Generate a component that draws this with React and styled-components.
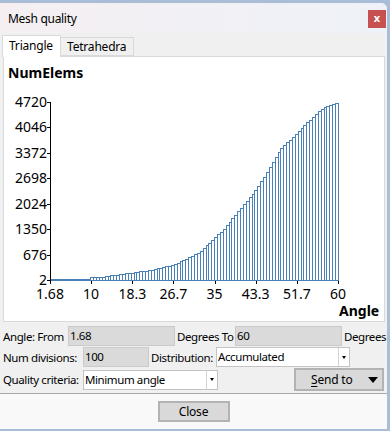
import styled, { createGlobalStyle } from "styled-components";

const GlobalStyle = createGlobalStyle`
  html, body {
    margin: 0;
    padding: 0;
    background: #aabdd6;
  }
  body {
    font-family: "Noto Sans", "Open Sans", sans-serif;
    font-size: 12px;
    color: #000;
  }
`

const Window = styled.div`
  margin-top: 3px;
  width: 387px;
  height: 426px;
  background: #f0f0f0;
  border-top-right-radius: 6px;
  display: flex;
  flex-direction: column;
  overflow: hidden;
`

const TitleBar = styled.div`
  height: 30px;
  flex: none;
  display: flex;
  align-items: center;
  justify-content: space-between;
  padding-left: 8px;
  background: linear-gradient(90deg, #f5eff2, #eef2f8);
  & span {
    letter-spacing: -0.3px;
  }
`

const CloseX = styled.div`
  width: 18px;
  height: 18px;
  margin-right: 1px;
  margin-top: 1px;
  background: #c75050;
  color: #fff;
  font-weight: bold;
  font-size: 11px;
  line-height: 16px;
  text-align: center;
`

const TabBar = styled.div`
  height: 23px;
  flex: none;
  display: flex;
  align-items: flex-end;
  padding-left: 2px;
  position: relative;
  z-index: 1;
`

const Tab = styled.div`
  height: ${({ active }) => active ? "22px" : "19px"};
  margin-bottom: ${({ active }) => active ? "-1px" : "0"};
  padding: 0 6px;
  box-sizing: border-box;
  width: ${({ w }) => w}px;
  border: 1px solid #d9d9d9;
  border-bottom: ${({ active }) => active ? "none" : "1px solid #d9d9d9"};
  border-left: ${({ first }) => first ? "1px solid #d9d9d9" : "none"};
  background: ${({ active }) => active ? "#fff" : "#f0f0f0"};
  line-height: ${({ active }) => active ? "20px" : "17px"};
  letter-spacing: -0.2px;
  white-space: nowrap;
`

const Panel = styled.div`
  margin-left: 3px;
  width: 380px;
  height: 264px;
  flex: none;
  border: 1px solid #d9d9d9;
  background: #fff;
  & svg {
    display: block;
  }
`

const Form = styled.div`
  flex: none;
  display: flex;
  flex-direction: column;
  gap: 1px;
  padding: 4px 3px 2px 3px;
  height: 71px;
  box-sizing: border-box;
  font-size: 11.5px;
  letter-spacing: -0.4px;
`

const Row = styled.div`
  display: flex;
  align-items: center;
  gap: 2px;
  height: ${({ h }) => h || 20}px;
`

const Label = styled.div`
  width: ${({ w }) => w ? w + "px" : "auto"};
  flex: none;
  white-space: nowrap;
`

const Field = styled.div`
  width: ${({ w }) => w}px;
  height: 20px;
  box-sizing: border-box;
  flex: none;
  background: #dadada;
  border: 1px solid #cacaca;
  padding-left: 1px;
  line-height: 18px;
`

const Combo = styled.div`
  width: ${({ w }) => w}px;
  height: 20px;
  box-sizing: border-box;
  flex: none;
  display: flex;
  background: #fff;
  border: 1px solid #c4c4c4;
  & span {
    flex: 1;
    padding-left: 1px;
    line-height: 18px;
    white-space: nowrap;
  }
`

const ComboArrow = styled.div`
  width: 10px;
  border-left: 1px solid #d4d4d4;
  display: flex;
  align-items: center;
  justify-content: center;
  &::after {
    content: "";
    border-left: 2.5px solid transparent;
    border-right: 2.5px solid transparent;
    border-top: 3px solid #000;
  }
`

const Spacer = styled.div`
  flex: 1;
`

const Button = styled.div`
  width: ${({ w }) => w}px;
  height: ${({ h }) => h}px;
  box-sizing: border-box;
  flex: none;
  background: #d9d9d9;
  border: 2px solid #b3b3b3;
  display: flex;
  align-items: center;
  justify-content: center;
  letter-spacing: -0.2px;
`

const SendButton = styled(Button)`
  justify-content: flex-start;
  padding-left: 15px;
  font-size: 12px;
  & u {
    text-underline-offset: 2px;
  }
  &::after {
    content: "";
    margin-left: auto;
    margin-right: 4px;
    border-left: 5px solid transparent;
    border-right: 5px solid transparent;
    border-top: 6px solid #000;
  }
`

const Separator = styled.div`
  height: 1px;
  flex: none;
  background: #a9a9a9;
`

const ButtonBar = styled.div`
  flex: 1;
  display: flex;
  align-items: center;
  justify-content: center;
  background: #f9f9f9;
`

// height of the accumulated bars in px, read off the reference
const curve = [
  [50, 0.3], [66, 0.3], [67, 1.2], [89, 1.2], [90, 2.5], [100, 3], [130, 7],
  [150, 10], [173, 15], [182, 19], [200, 28], [223, 50], [257, 91], [270, 112],
  [280, 130], [307, 157], [323, 172], [338, 178],
]

const heightAt = (x) => {
  for (let i = 1; i < curve.length; i++) {
    const [x1, h1] = curve[i]
    const [x0, h0] = curve[i - 1]
    if (x <= x1) return h0 + (h1 - h0) * (x - x0) / (x1 - x0)
  }
  return 178
}

const BASE = 280
const X0 = 50
const BAR_W = 2.88

const bars = Array.from({ length: 100 }, (_, i) => {
  const left = Math.round(X0 + i * BAR_W)
  const right = Math.round(X0 + (i + 1) * BAR_W)
  const h = Math.max(1, Math.round(heightAt(X0 + (i + 0.5) * BAR_W)))
  return { left, right, h }
})

const yLabels = ["2", "676", "1350", "2024", "2698", "3372", "4046", "4720"]
const xLabels = ["1.68", "10", "18.3", "26.7", "35", "43.3", "51.7", "60"]

const Chart = () => (
  <svg width="380" height="264" viewBox="4 57 380 264" fontFamily='"Noto Sans", sans-serif'>
    <text x="8" y="78" fontSize="14" fontWeight="bold">NumElems</text>
    <text x="339" y="316" fontSize="14" fontWeight="bold">Angle</text>
    <g shapeRendering="crispEdges">
      {bars.map((b, i) => (
        <rect key={i} x={b.left + 0.5} y={BASE - b.h + 0.5} width={b.right - b.left} height={b.h}
          fill="#fff" stroke="#4a80b8" strokeWidth="1" />
      ))}
      <line x1="50.5" y1="102" x2="50.5" y2="281" stroke="#000" />
      {yLabels.map((l, k) => {
        const y = Math.round(BASE - k * 25.43) + 0.5
        return <line key={l} x1="47" y1={y} x2="50" y2={y} stroke="#000" />
      })}
      {xLabels.map((l, k) => {
        const x = Math.round(X0 + k * 41.14) + 0.5
        return <line key={l} x1={x} y1="281" x2={x} y2="284" stroke="#000" />
      })}
    </g>
    {yLabels.map((l, k) => (
      <text key={l} x="47" y={BASE - k * 25.43 + 5} fontSize="14" textAnchor="end">{l}</text>
    ))}
    {xLabels.map((l, k) => (
      <text key={l} x={X0 + k * 41.14} y="298.5" fontSize="14" textAnchor="middle">{l}</text>
    ))}
  </svg>
)

export default function App() {
  return (
    <>
      <GlobalStyle />
      <Window>
        <TitleBar>
          <span>Mesh quality</span>
          <CloseX>x</CloseX>
        </TitleBar>
        <TabBar>
          <Tab active first w={59}>Triangle</Tab>
          <Tab w={73}>Tetrahedra</Tab>
        </TabBar>
        <Panel>
          <Chart />
        </Panel>
        <Form>
          <Row>
            <Label w={63}>Angle: From</Label>
            <Field w={107}>1.68</Field>
            <Label w={56}>Degrees To</Label>
            <Field w={107}>60</Field>
            <Label>Degrees</Label>
          </Row>
          <Row>
            <Label w={78}>Num divisions:</Label>
            <Field w={66}>100</Field>
            <Label w={63}>Distribution:</Label>
            <Combo w={134}>
              <span>Accumulated</span>
              <ComboArrow />
            </Combo>
          </Row>
          <Row h={23}>
            <Label w={78}>Quality criteria:</Label>
            <Combo w={135}>
              <span>Minimum angle</span>
              <ComboArrow />
            </Combo>
            <Spacer />
            <SendButton w={90} h={23}><u>S</u>end to</SendButton>
          </Row>
        </Form>
        <Separator />
        <ButtonBar>
          <Button w={72} h={21}>Close</Button>
        </ButtonBar>
      </Window>
    </>
  )
}
